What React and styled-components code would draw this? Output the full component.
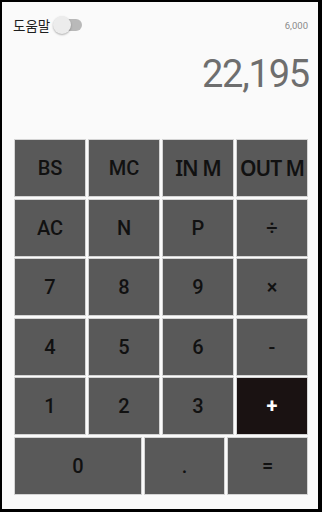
import React from 'react';
import styled, { createGlobalStyle } from 'styled-components';

const GlobalStyle = createGlobalStyle`
  html, body {
    margin: 0;
    padding: 0;
    background: #000;
  }
  body {
    font-family: Roboto, 'Noto Sans', sans-serif;
  }
`;

const Screen = styled.div`
  width: 316px;
  height: 507px;
  margin: 2px 4px 3px 2px;
  background: #fafafa;
  display: flex;
  flex-direction: column;
  overflow: hidden;
`;

const TopBar = styled.div`
  height: 22px;
  margin-top: 12px;
  padding: 0 10px 0 11px;
  display: flex;
  align-items: center;
  justify-content: space-between;
`;

const HelpGroup = styled.div`
  display: flex;
  align-items: center;
  gap: 4px;
`;

const HelpLabel = styled.span`
  font-family: 'Noto Sans CJK KR', 'Noto Sans', sans-serif;
  font-size: 13.5px;
  color: #1e1e1e;
`;

const Track = styled.span`
  position: relative;
  display: block;
  width: 28px;
  height: 12px;
  border-radius: 6px;
  background: #b9b9b9;
`;

const Thumb = styled.span`
  position: absolute;
  left: -1px;
  top: -3px;
  width: 18px;
  height: 18px;
  border-radius: 50%;
  background: #ececec;
  box-shadow: 0 1px 2px rgba(0, 0, 0, 0.3);
`;

const Memory = styled.span`
  font-size: 9.5px;
  color: #8a8a8a;
`;

const Display = styled.div`
  margin-top: 19px;
  height: 38px;
  padding-right: 9px;
  text-align: right;
  font-size: 38px;
  line-height: 38px;
  letter-spacing: -1.2px;
  color: #6e6e6e;
`;

const Keypad = styled.div`
  margin-top: 47px;
  margin-left: 13px;
  width: 292px;
  display: flex;
  flex-direction: column;
  gap: 3.6px;
`;

const Row = styled.div`
  display: grid;
  grid-template-columns: ${props => props.cols || 'repeat(4, 1fr)'};
  gap: 4px;
  height: 56px;
`;

const Key = styled.div`
  display: flex;
  align-items: center;
  justify-content: center;
  background: ${props => (props.dark ? '#1a1212' : '#595959')};
  box-shadow: 0 0 0 1px #d4d4d4;
  color: ${props => (props.dark ? '#fff' : '#111')};
  font-family: ${props => (props.wide ? "'Noto Sans', sans-serif" : 'Roboto, sans-serif')};
  font-size: ${props => (props.wide ? '21px' : '20px')};
  font-weight: ${props => (props.dark ? 700 : props.wide ? 600 : 500)};
  letter-spacing: ${props => (props.wide ? '-1px' : '0')};
  white-space: nowrap;
  overflow: hidden;
`;

const rows = [
  [{ t: 'BS' }, { t: 'MC' }, { t: 'IN M', wide: true }, { t: 'OUT M', wide: true }],
  [{ t: 'AC' }, { t: 'N' }, { t: 'P' }, { t: '÷' }],
  [{ t: '7' }, { t: '8' }, { t: '9' }, { t: '×' }],
  [{ t: '4' }, { t: '5' }, { t: '6' }, { t: '-' }],
  [{ t: '1' }, { t: '2' }, { t: '3' }, { t: '+', dark: true }],
];

export default function App() {
  return (
    <>
      <GlobalStyle />
      <Screen>
        <TopBar>
          <HelpGroup>
            <HelpLabel>도움말</HelpLabel>
            <Track>
              <Thumb />
            </Track>
          </HelpGroup>
          <Memory>6,000</Memory>
        </TopBar>
        <Display>22,195</Display>
        <Keypad>
          {rows.map((row, i) => (
            <Row key={i}>
              {row.map(k => (
                <Key key={k.t} wide={k.wide} dark={k.dark}>{k.t}</Key>
              ))}
            </Row>
          ))}
          <Row cols="126px 79px 79px">
            <Key>0</Key>
            <Key>.</Key>
            <Key>=</Key>
          </Row>
        </Keypad>
      </Screen>
    </>
  );
}
